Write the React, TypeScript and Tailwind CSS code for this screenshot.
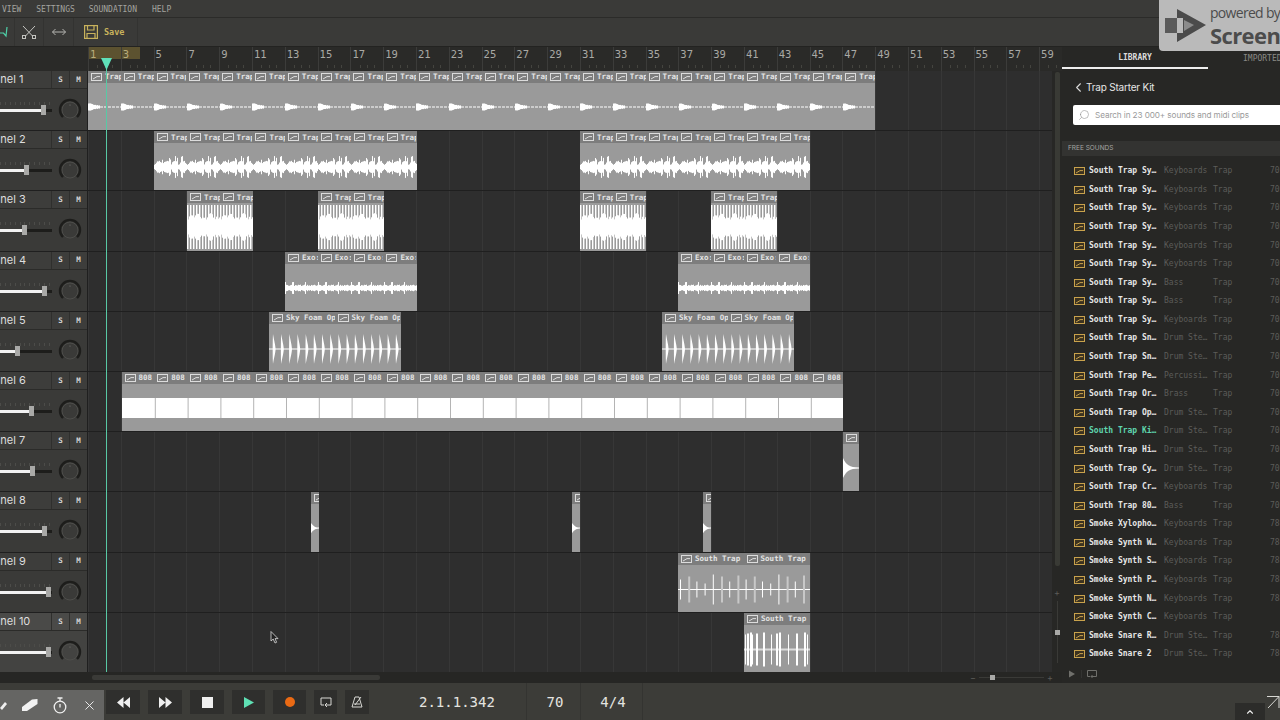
import React from "react";
import { ChevronLeft, ChevronUp, Search, X } from "lucide-react";

const MONO = "font-['DejaVu_Sans_Mono',monospace]";
const BAR = 32.8;

const rnd = (n: number) => {
  const s = Math.sin(n * 127.1 + 3.7) * 43758.5453;
  return s - Math.floor(s);
};

type Kind = "pulse" | "noise" | "dense" | "thin" | "needle" | "keys" | "hit" | "tick" | "cluster";
type Clip = { x: number; w: number; seg: number; name: string };

const tracks: { name: string; thumb: number; kind: Kind; clips: Clip[] }[] = [
  { name: "Channel 1", thumb: 43, kind: "pulse", clips: [{ x: 88, w: 787, seg: BAR, name: "Trap" }] },
  {
    name: "Channel 2",
    thumb: 26,
    kind: "noise",
    clips: [
      { x: 154, w: 263, seg: BAR, name: "Trap" },
      { x: 580, w: 230, seg: BAR, name: "Trap" },
    ],
  },
  {
    name: "Channel 3",
    thumb: 24,
    kind: "dense",
    clips: [
      { x: 187, w: 66, seg: BAR, name: "Trap" },
      { x: 318, w: 66, seg: BAR, name: "Trap" },
      { x: 580, w: 66, seg: BAR, name: "Trap" },
      { x: 711, w: 66, seg: BAR, name: "Trap" },
    ],
  },
  {
    name: "Channel 4",
    thumb: 44,
    kind: "thin",
    clips: [
      { x: 285, w: 132, seg: BAR, name: "Exo:" },
      { x: 678, w: 132, seg: BAR, name: "Exo:" },
    ],
  },
  {
    name: "Channel 5",
    thumb: 17,
    kind: "needle",
    clips: [
      { x: 269, w: 132, seg: 65.6, name: "Sky Foam Op" },
      { x: 662, w: 132, seg: 65.6, name: "Sky Foam Op" },
    ],
  },
  { name: "Channel 6", thumb: 31, kind: "keys", clips: [{ x: 121.5, w: 721.5, seg: BAR, name: "808" }] },
  { name: "Channel 7", thumb: 32, kind: "hit", clips: [{ x: 843, w: 16.4, seg: BAR, name: "" }] },
  {
    name: "Channel 8",
    thumb: 44,
    kind: "hit",
    clips: [
      { x: 311, w: 8.2, seg: BAR, name: "" },
      { x: 572, w: 8.2, seg: BAR, name: "" },
      { x: 703, w: 8.2, seg: BAR, name: "" },
    ],
  },
  { name: "Channel 9", thumb: 48, kind: "tick", clips: [{ x: 678, w: 132, seg: 65.6, name: "South Trap" }] },
  { name: "Channel 10", thumb: 48, kind: "cluster", clips: [{ x: 744, w: 66, seg: 65.6, name: "South Trap" }] },
];

const sounds: [string, string, string?][] = [
  ["South Trap Sy…", "Keyboards"],
  ["South Trap Sy…", "Keyboards"],
  ["South Trap Sy…", "Keyboards"],
  ["South Trap Sy…", "Keyboards"],
  ["South Trap Sy…", "Keyboards"],
  ["South Trap Sy…", "Keyboards"],
  ["South Trap Sy…", "Bass"],
  ["South Trap Sy…", "Bass"],
  ["South Trap Sy…", "Keyboards"],
  ["South Trap Sn…", "Drum Ste…"],
  ["South Trap Sn…", "Drum Ste…"],
  ["South Trap Pe…", "Percussi…"],
  ["South Trap Or…", "Brass"],
  ["South Trap Op…", "Drum Ste…"],
  ["South Trap Ki…", "Drum Ste…"],
  ["South Trap Hi…", "Drum Ste…"],
  ["South Trap Cy…", "Drum Ste…"],
  ["South Trap Cr…", "Keyboards"],
  ["South Trap 80…", "Bass"],
  ["Smoke Xylopho…", "Keyboards", "78B"],
  ["Smoke Synth W…", "Keyboards", "78B"],
  ["Smoke Synth S…", "Keyboards", "78B"],
  ["Smoke Synth P…", "Keyboards", "78B"],
  ["Smoke Synth N…", "Keyboards", "78B"],
  ["Smoke Synth C…", "Keyboards", ""],
  ["Smoke Snare R…", "Drum Ste…", "78B"],
  ["Smoke Snare 2", "Drum Ste…", "78B"],
];

function lines(w: number, amp: (x: number) => number, cy = 24, step = 1) {
  let d = "";
  for (let x = 0; x < w; x += step) {
    const a = amp(x);
    if (a > 0) d += `M${x + 0.5} ${cy - a}V${cy + a}`;
  }
  return d;
}

function Wave({ kind, w, seg }: { kind: Kind; w: number; seg: number }) {
  const ph = (x: number) => x % seg;
  if (kind === "keys") {
    const marks = [];
    for (let x = BAR; x < w; x += BAR) marks.push(x);
    return (
      <svg width={w} height={48} className="block">
        <rect x={0} y={14} width={w} height={20} fill="#fff" />
        {marks.map((x) => (
          <rect key={x} x={x} y={14} width={1} height={20} fill="#b4b4b4" />
        ))}
      </svg>
    );
  }
  if (kind === "hit") {
    const a = Math.min(w, 16);
    return (
      <svg width={w} height={48} className="block">
        <path d={`M0 ${24 - a * 0.62}C${a * 0.2} 21 ${a * 0.4} 23.5 ${a} 23.6V24.4C${a * 0.4} 24.5 ${a * 0.2} 27 0 ${24 + a * 0.62}Z`} fill="#fff" />
      </svg>
    );
  }
  if (kind === "needle") {
    let d = "";
    for (let x = 4; x < w - 1; x += 8.2) d += `M${x} 10C${x + 1.2} 17 ${x + 2.4} 21 ${x + 2.6} 25C${x + 2.4} 29 ${x + 1.2} 33 ${x} 40C${x - 0.4} 33 ${x - 0.4} 17 ${x} 10Z`;
    return (
      <svg width={w} height={48} className="block">
        <rect x={0} y={24.5} width={w} height={1} fill="#fff" />
        <path d={d} fill="#fff" />
      </svg>
    );
  }
  if (kind === "dense") {
    return (
      <svg width={w} height={48} className="block">
        <path d={lines(w, (x) => (Math.floor(x) % 3 === 1 ? 22 : 0))} stroke="#c4c4c4" strokeWidth={1} />
        <path d={lines(w, (x) => (Math.floor(x) % 3 === 0 ? 22 : 0))} stroke="#fff" strokeWidth={1} />
        <path d={lines(w, (x) => 5 + 5 * rnd(Math.floor(ph(x)) + 9) + 4 * Math.abs(Math.sin(ph(x) / 5)))} stroke="#fff" strokeWidth={1} />
      </svg>
    );
  }
  if (kind === "tick") {
    const amps = [10, 13, 8, 6, 15, 13, 8, 14];
    const gray = [false, true, false, false, false, true, false, true];
    const seq = Array.from({ length: 16 }, (_, i) => i);
    return (
      <svg width={w} height={48} className="block">
        <rect x={0} y={24} width={w} height={1} fill="#fff" />
        {seq.map((i) => (
          <rect
            key={i}
            x={2 + i * 8.2}
            y={24.5 - amps[i % 8]}
            width={gray[i % 8] ? 2 : 1}
            height={amps[i % 8] * 2}
            fill={gray[i % 8] ? "#c8c8c8" : "#fff"}
          />
        ))}
      </svg>
    );
  }
  if (kind === "cluster") {
    const bars = [1, 3, 6, 8, 12, 19, 27, 32, 35, 44, 52, 60, 63];
    return (
      <svg width={w} height={48} className="block">
        <rect x={0} y={23.5} width={w} height={2} fill="#dcdcdc" />
        {bars.map((x, i) => (
          <rect key={x} x={x} y={24.5 - (15 + (i % 3))} width={i % 3 === 0 ? 1 : 2} height={(15 + (i % 3)) * 2} fill="#fff" />
        ))}
      </svg>
    );
  }
  let amp: (x: number) => number;
  if (kind === "pulse") {
    amp = (x) => {
      const p = ph(x);
      if (p < 12) return Math.max(0.8, 3.4 - p * 0.22) + rnd(Math.floor(p)) * 0.8;
      return Math.floor(p) % 4 === 3 ? 0 : 0.5;
    };
  } else if (kind === "noise") {
    amp = (x) => {
      const p = Math.floor(ph(x));
      const r = rnd(p + 4);
      return 1.5 + Math.abs(Math.sin(p / 2.6)) * 4 + (r > 0.82 ? 5.5 : r * 1.5);
    };
  } else {
    amp = (x) => {
      const p = Math.floor(ph(x));
      const r = rnd(p + 12);
      return 2 + r * 1.5 + (r > 0.9 ? 2.5 : 0);
    };
  }
  return (
    <svg width={w} height={48} className="block">
      <path d={lines(w, amp)} stroke="#fff" strokeWidth={1} />
    </svg>
  );
}

function ClipIcon({ gold }: { gold?: boolean }) {
  const c = gold ? "#c9a24c" : "#dcdcdc";
  return (
    <svg width={11} height={8} viewBox="0 0 11 8" className="shrink-0">
      <rect x={0.5} y={0.5} width={10} height={7} fill={gold ? "#3b3220" : "none"} stroke={c} />
      <path d="M2 6L6 3.6H9" fill="none" stroke={c} />
    </svg>
  );
}

function ClipBlock({ clip, kind }: { clip: Clip; kind: Kind }) {
  const n = Math.ceil(clip.w / clip.seg);
  return (
    <div className="absolute top-0 h-[59.5px] overflow-hidden bg-[#9a9a9a]" style={{ left: clip.x - 88, width: clip.w }}>
      <div className="flex h-[12px] bg-[#7d7d7d]">
        {Array.from({ length: n }).map((_, i) => (
          <div
            key={i}
            className={`flex shrink-0 items-center gap-[3px] overflow-hidden pl-[3px] text-[7.5px] font-bold text-[#e4e4e4] ${MONO}`}
            style={{ width: clip.seg }}
          >
            <ClipIcon />
            <span className="whitespace-pre">{clip.name}</span>
          </div>
        ))}
      </div>
      <Wave kind={kind} w={clip.w} seg={clip.seg} />
    </div>
  );
}

function Knob() {
  return (
    <svg width={24} height={24} viewBox="0 0 24 24">
      <circle cx={12} cy={12} r={8} fill="none" stroke="#4e4e4b" strokeWidth={1} />
      <path d="M5 19A10 10 0 1 1 19 19" fill="none" stroke="#1d1d1b" strokeWidth={2.4} />
      <circle cx={12} cy={7} r={0.6} fill="#7a7a76" />
    </svg>
  );
}

function TrackHead({ name, thumb, active }: { name: string; thumb: number; active: boolean }) {
  const ticks = Array.from({ length: 11 }, (_, i) => i);
  return (
    <div className={`flex h-full w-[88px] shrink-0 flex-col border-r border-[#1f1f1f] ${active ? "bg-[#434341]" : "bg-[#3a3a38]"}`}>
      <div className={`flex h-[18px] shrink-0 border-b border-[#2b2b29] ${active ? "bg-[#4a4a48]" : "bg-[#3d3d3b]"}`}>
        <div className="flex-1 overflow-hidden">
          <div className="-ml-[27px] whitespace-nowrap text-[11px] leading-[17px] text-[#dedede]">{name}</div>
        </div>
        <div className={`flex w-[18px] items-center justify-center border-l border-[#2f2f2d] text-[7.5px] font-bold text-[#d5d5d5] ${MONO}`}>S</div>
        <div className={`flex w-[18px] items-center justify-center border-l border-[#2f2f2d] text-[7.5px] font-bold text-[#d5d5d5] ${MONO}`}>M</div>
      </div>
      <div className="flex flex-1 items-start">
        <div className="relative mt-[13px] h-[16px] w-[52px] shrink-0">
          <div className="flex justify-between pr-[2px]">
            {ticks.map((i) => (
              <div key={i} className="h-[3px] w-px bg-[#4c4c49]" />
            ))}
          </div>
          <div className="absolute left-0 top-[7px] h-[3px] w-full bg-[#1d1d1b]" />
          <div className="absolute left-0 top-[7px] h-[3px] bg-[#f2f2f2]" style={{ width: thumb }} />
          <div className="absolute top-[3px] h-[10px] w-[5px] bg-[#a9a9a7]" style={{ left: thumb - 2 }} />
        </div>
        <div className="ml-[6px] mt-[9px]">
          <Knob />
        </div>
      </div>
    </div>
  );
}

function Ruler() {
  const nums = Array.from({ length: 30 }, (_, i) => i * 2 + 1);
  return (
    <div className="flex h-[24px] shrink-0 bg-[#2a2a28]">
      <div className="h-full w-[88px] shrink-0 bg-[#2a2a28]" />
      <div className="relative flex-1 overflow-hidden">
        <div className="absolute left-0 top-0 h-[12px] w-[52px] bg-[#5c5230]" />
        <div className="relative flex h-full">
          {nums.map((n) => (
            <div key={n} className="h-full w-[32.8px] shrink-0 border-l border-[#3c3c3a] pl-[1px]">
              <span className={`text-[10.5px] leading-[14px] ${n < 5 ? "text-[#b9ad7c]" : "text-[#a9a9a5]"} ${MONO} block`}>{n}</span>
              <div className="mt-[4px] flex justify-between pr-[8px]">
                <div className="h-[3px] w-px" />
                <div className="h-[3px] w-px bg-[#44443f]" />
                <div className="h-[3px] w-px bg-[#44443f]" />
                <div className="h-[3px] w-px bg-[#44443f]" />
              </div>
            </div>
          ))}
        </div>
      </div>
    </div>
  );
}

function TopBars() {
  return (
    <>
      <div className={`flex h-[18px] shrink-0 items-center border-b border-[#2b2b29] bg-[#3a3a38] pt-[2px] text-[8px] text-[#a3a39f] ${MONO}`}>
        <span className="ml-[2px]">VIEW</span>
        <span className="ml-[15px]">SETTINGS</span>
        <span className="ml-[14px]">SOUNDATION</span>
        <span className="ml-[15px]">HELP</span>
      </div>
      <div className="flex h-[29px] shrink-0 border-b border-[#232321] bg-[#3a3a38]">
        <div className="flex w-[15px] items-center border-r border-[#333331]">
          <svg width={8} height={12} viewBox="0 0 8 12">
            <path d="M7 1L6 10L3.5 7L0 7" fill="none" stroke="#4fd0a8" strokeWidth={1.2} />
          </svg>
        </div>
        <div className="flex w-[29px] items-center justify-center border-r border-[#333331]">
          <svg width={14} height={14} viewBox="0 0 14 14" fill="none" stroke="#c4c4c0" strokeWidth={1}>
            <path d="M1 1L10.5 11M13 1L3.5 11" />
            <rect x={0.5} y={10.5} width={3} height={3} />
            <rect x={10.5} y={10.5} width={3} height={3} />
          </svg>
        </div>
        <div className="flex w-[30px] items-center justify-center border-r border-[#333331]">
          <svg width={14} height={8} viewBox="0 0 14 8" fill="none" stroke="#b5b5b1" strokeWidth={1}>
            <path d="M0.5 4H13.5M3.5 1L0.5 4L3.5 7M10.5 1L13.5 4L10.5 7" />
          </svg>
        </div>
        <div className="flex w-[64px] items-center border-r border-[#333331] pl-[10px]">
          <svg width={14} height={14} viewBox="0 0 14 14" fill="none" stroke="#c8b25c" strokeWidth={1.2}>
            <rect x={0.6} y={0.6} width={12.8} height={12.8} />
            <path d="M3.5 1V5H10V1M3 13V8.5H11V13" />
          </svg>
          <span className={`ml-[6px] text-[8.5px] font-bold text-[#c8b25c] ${MONO}`}>Save</span>
        </div>
      </div>
    </>
  );
}

function Library() {
  return (
    <div className="flex h-full w-[218px] shrink-0 flex-col overflow-hidden bg-[#272725]">
      <div className={`flex h-[22px] shrink-0 pt-[1px] text-[8px] ${MONO}`}>
        <div className="flex h-full w-[146px] shrink-0 items-center justify-center border-b-2 border-[#eeeeee] font-bold text-[#dcdcdc]">LIBRARY</div>
        <div className="flex h-full items-center whitespace-nowrap pl-[35px] text-[#8a8a86]">IMPORTED</div>
      </div>
      <div className="flex h-[36px] shrink-0 items-center pl-[9px] text-[10px] text-[#e6e6e6]">
        <ChevronLeft size={15} strokeWidth={1.7} className="text-[#dcdcdc]" />
        <span className="tracking-[-0.2px]">Trap Starter Kit</span>
      </div>
      <div className="ml-[11px] flex h-[20px] w-[220px] shrink-0 items-center rounded-[2px] bg-white pl-[5px] text-[8.2px] text-[#9a9a9a]">
        <Search size={12} strokeWidth={1.1} className="-scale-x-100 text-[#8a8a8a]" />
        <span className="ml-[5px] whitespace-nowrap tracking-[-0.1px]">Search in 23 000+ sounds and midi clips</span>
      </div>
      <div className="mt-[16px] flex h-[15px] shrink-0 items-center bg-[#333331] pl-[6px] text-[6.5px] text-[#a5a5a1]">FREE SOUNDS</div>
      <div className="mt-[6px] min-h-0 flex-1 overflow-hidden">
        {sounds.map(([name, genre, bpm], i) => (
          <div key={i} className={`flex h-[18.58px] items-center whitespace-nowrap text-[8px] ${MONO}`}>
            <div className="ml-[12px] flex w-[15px] shrink-0">
              <ClipIcon gold />
            </div>
            <span className={`w-[75px] shrink-0 font-bold ${i === 14 ? "text-[#5fd6ae]" : "text-[#e6e6e6]"}`}>{name}</span>
            <span className="w-[49px] shrink-0 text-[#5c5c59]">{genre}</span>
            <span className="w-[57px] shrink-0 text-[#5c5c59]">Trap</span>
            <span className="text-[#5c5c59]">{bpm ?? "70B"}</span>
          </div>
        ))}
      </div>
      <div className="flex h-[18px] shrink-0 items-center">
        <div className="flex w-[20px] items-center justify-center border-r border-[#333331]">
          <svg width={8} height={8} viewBox="0 0 8 8">
            <path d="M1 0.5L7 4L1 7.5Z" fill="#6f6f6b" />
          </svg>
        </div>
        <div className="ml-[5px]">
          <svg width={10} height={9} viewBox="0 0 10 9" fill="none" stroke="#6f6f6b">
            <path d="M3 6.5H0.5V0.5H9.5V6.5H4M5.5 5L4 6.5L5.5 8" />
          </svg>
        </div>
      </div>
    </div>
  );
}

function TransportBtn({ w, children }: { w: string; children: React.ReactNode }) {
  return <div className={`flex h-[24px] items-center justify-center bg-[#2f2f2d] ${w}`}>{children}</div>;
}

function Transport() {
  return (
    <div className="flex h-[37px] shrink-0 items-start bg-[#3c3c38]">
      <div className="mt-[7px] flex h-[30px] w-[104px] shrink-0 items-center overflow-hidden bg-[#656563]">
        <svg width={7} height={12} viewBox="0 0 7 12">
          <path d="M0 9L5 3L7 5L2 11Z" fill="#efefef" />
        </svg>
        <svg width={16} height={14} viewBox="0 0 16 14" className="ml-[15px]">
          <path d="M0 9L10 1.5L15.5 1V6L5 13L0 13Z" fill="#f2f2f2" />
        </svg>
        <svg width={14} height={17} viewBox="0 0 14 17" fill="none" stroke="#f0f0f0" strokeWidth={1.3} className="ml-[15px]">
          <circle cx={7} cy={10} r={5.8} />
          <path d="M4.5 1H9.5M7 1V4M7 7V10.5" />
        </svg>
        <X size={15} strokeWidth={1.5} className="ml-[15px] text-[#f0f0f0]" />
      </div>
      <div className="ml-[2px] mt-[7px] flex gap-[8px]">
        <TransportBtn w="w-[34px]">
          <svg width={13} height={11} viewBox="0 0 13 11" fill="#f0f0f0"><path d="M6.5 0V11L0 5.5ZM13 0V11L6.5 5.5Z" /></svg>
        </TransportBtn>
        <TransportBtn w="w-[34px]">
          <svg width={13} height={11} viewBox="0 0 13 11" fill="#f0f0f0"><path d="M0 0V11L6.5 5.5ZM6.5 0V11L13 5.5Z" /></svg>
        </TransportBtn>
        <TransportBtn w="w-[34px]">
          <div className="h-[11px] w-[11px] bg-[#efefef]" />
        </TransportBtn>
        <TransportBtn w="w-[33px]">
          <svg width={10} height={11} viewBox="0 0 10 11" fill="#5fe0b4"><path d="M0 0L10 5.5L0 11Z" /></svg>
        </TransportBtn>
        <TransportBtn w="w-[33px]">
          <div className="h-[10px] w-[10px] rounded-full bg-[#ea6a14]" />
        </TransportBtn>
        <TransportBtn w="w-[23px]">
          <svg width={12} height={11} viewBox="0 0 12 11" fill="none" stroke="#d8d8d4"><path d="M4 8H1V1H11V8H5.5M7 6L5 8L7 10" /></svg>
        </TransportBtn>
        <TransportBtn w="w-[24px]">
          <svg width={12} height={12} viewBox="0 0 12 12" fill="none" stroke="#d8d8d4"><path d="M4 1H8L11 11H1ZM3 8H9M4 9L10 1" /></svg>
        </TransportBtn>
      </div>
      <div className={`ml-[50px] flex h-full w-[108px] shrink-0 items-center border-r border-[#343431] pt-[2px] text-[14px] text-[#e4e4e0] ${MONO}`}>
        <span>2.1.1.342</span>
      </div>
      <div className={`flex h-full w-[54px] shrink-0 items-center justify-center border-r border-[#343431] pl-[3px] pt-[2px] text-[14px] text-[#e4e4e0] ${MONO}`}>70</div>
      <div className={`flex h-full w-[62px] shrink-0 items-center justify-center border-r border-[#343431] pl-[3px] pt-[2px] text-[14px] text-[#e4e4e0] ${MONO}`}>4/4</div>
    </div>
  );
}

export default function App() {
  return (
    <div className="relative flex h-[720px] w-[1280px] flex-col overflow-hidden bg-[#272725] font-['Inter',sans-serif]">
      <TopBars />
      <div className="flex min-h-0 flex-1">
        <div className="relative flex h-full w-[1062px] shrink-0 flex-col">
          <Ruler />
          <div className="flex min-h-0 flex-1">
            <div className="h-full w-[1052px] shrink-0 overflow-hidden">
              {tracks.map((t, i) => (
                <div key={t.name} className="flex h-[60.2px] border-b border-[#1f1f1f]">
                  <TrackHead name={t.name} thumb={t.thumb} active={i === 9} />
                  <div className="relative flex-1 overflow-hidden bg-[#2e2e2e] bg-[repeating-linear-gradient(90deg,#373737_0,#373737_1px,transparent_1px,transparent_32.8px)]">
                    {t.clips.map((c) => (
                      <ClipBlock key={c.x} clip={c} kind={t.kind} />
                    ))}
                  </div>
                </div>
              ))}
            </div>
            <div className="flex h-full w-[10px] shrink-0 flex-col items-center bg-[#272725]">
              <div className="mt-[1px] h-[494px] w-[5px] shrink-0 rounded-[2px] bg-[#393a35]" />
              <div className="mt-[22px] text-[9px] leading-[10px] text-[#5c5c58]">+</div>
              <div className="relative mt-[3px] h-[62px] w-px bg-[#3a3a37]">
                <div className="absolute left-[-2px] top-[29px] h-[5px] w-[5px] bg-[#a9a9a7]" />
              </div>
            </div>
          </div>
          <div className="flex h-[11px] shrink-0 items-center bg-[#262624]">
            <div className="ml-[92px] h-[5px] w-[288px] rounded-[2px] bg-[#3a3a37]" />
            <span className="ml-[590px] text-[9px] leading-[9px] text-[#5c5c58]">−</span>
            <div className="relative ml-[3px] h-px w-[65px] bg-[#3a3a37]">
              <div className="absolute left-[11px] top-[-2px] h-[5px] w-[5px] bg-[#a9a9a7]" />
            </div>
            <span className="ml-[3px] text-[9px] leading-[9px] text-[#5c5c58]">+</span>
          </div>
          {/* playhead sits over the clips */}
          <div className="absolute bottom-[11px] left-[106px] top-[11px] w-px bg-[#58c9a5]">
            <svg width={11} height={12} viewBox="0 0 11 12" className="absolute left-[-5px] top-0">
              <path d="M0 0H11L5.5 12Z" fill="#5fe0b8" />
            </svg>
          </div>
        </div>
        <Library />
      </div>
      <Transport />

      {/* watermark */}
      <div className="absolute right-0 top-0 flex h-[51px] w-[121px] overflow-hidden rounded-bl-[4px] bg-[#bababa]">
        <svg width={50} height={42} viewBox="0 0 50 42" className="ml-[4px] mt-[8px] shrink-0">
          <path d="M2 10H14V25H2Z" fill="#5a5a5a" />
          <path d="M14 1L43 17L14 34V25H20V10H14Z" fill="#4b4b4b" />
          <path d="M21 12L31 17L21 23Z" fill="#8b8b8b" />
        </svg>
        <div className="-ml-[3px] flex flex-col whitespace-nowrap font-['Open_Sans',sans-serif] text-[#4c4c4c]">
          <span className="mt-[3px] text-[14px] leading-[20px] tracking-[-0.7px]">powered by</span>
          <span className="-mt-[1px] text-[22px] font-bold leading-[26px] tracking-[-0.6px]">Screencast</span>
        </div>
      </div>

      {/* mouse pointer */}
      <svg width={9} height={13} viewBox="0 0 9 13" className="absolute left-[270px] top-[631px]">
        <path d="M1 0.5V10L3.2 8L5 12L6.6 11.3L5 7.6H8Z" fill="#222" stroke="#ddd" strokeWidth={0.8} />
      </svg>

      {/* overlay in the corner */}
      <svg width={14} height={14} viewBox="0 0 14 14" fill="none" stroke="#d8d8d4" className="absolute left-[1267px] top-[696px]">
        <path d="M0 0.5H12V12M12 0.5L1 12" />
      </svg>
      <div className="absolute bottom-0 left-[1235px] flex h-[17px] w-[30px] items-center justify-center bg-[#2c2c2a]">
        <ChevronUp size={10} strokeWidth={2.6} className="text-[#eeeeee]" />
      </div>
    </div>
  );
}
